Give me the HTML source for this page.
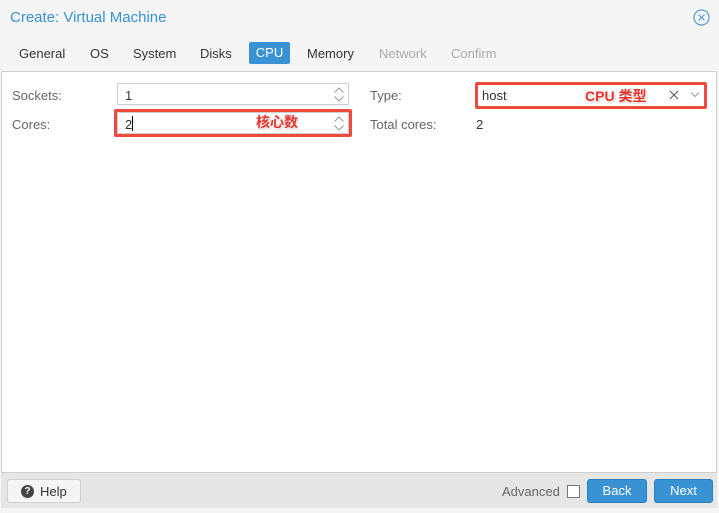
<!DOCTYPE html>
<html><head><style>
*{box-sizing:border-box;margin:0;padding:0}
body{width:719px;height:513px;background:#f5f5f5;font-family:"Liberation Sans","Noto Sans CJK SC",sans-serif;font-size:13px;color:#333;position:relative;overflow:hidden}
.a{position:absolute}
.title{left:10px;top:9px;font-size:15px;color:#3892d4}
.tab{top:46px;font-size:13px;color:#333}
.panel{left:1px;top:71px;width:716px;height:402px;background:#fff;border:1px solid #cfcfcf}
.lbl{color:#666}
.inp{background:#fff;border:1px solid #cfcfcf}
.red{border:3px solid #ee4b3e;border-radius:2px}
.ann{color:#e8322a;font-weight:bold;font-size:14px;text-shadow:0 0 2px #fff,0 0 2px #fff,1px 1px 2px #aaa}
.footer{left:1px;top:473px;width:716px;height:35px;background:#e6e6e6}
.btn{border-radius:3px;text-align:center;line-height:22px}
</style></head><body>
<div class="a title">Create: Virtual Machine</div>
<svg class="a" style="left:693px;top:9px" width="17" height="17" viewBox="0 0 17 17"><circle cx="8.5" cy="8.5" r="7.5" fill="none" stroke="#5b9bd5" stroke-width="1.2"/><path d="M5.5 5.5L11.5 11.5M11.5 5.5L5.5 11.5" stroke="#5b9bd5" stroke-width="1.2"/></svg>
<div class="a tab" style="left:19px">General</div>
<div class="a tab" style="left:90px">OS</div>
<div class="a tab" style="left:133px">System</div>
<div class="a tab" style="left:200px">Disks</div>
<div class="a" style="left:249px;top:42px;width:41px;height:22px;background:#3892d4;border-radius:2px;color:#fff;text-align:center;line-height:22px">CPU</div>
<div class="a tab" style="left:307px">Memory</div>
<div class="a tab" style="left:379px;color:#aaa">Network</div>
<div class="a tab" style="left:451px;color:#aaa">Confirm</div>
<div class="a panel"></div>
<div class="a lbl" style="left:12px;top:88px">Sockets:</div>
<div class="a lbl" style="left:12px;top:117px">Cores:</div>
<div class="a lbl" style="left:370px;top:88px">Type:</div>
<div class="a lbl" style="left:370px;top:117px">Total cores:</div>
<div class="a" style="left:476px;top:117px">2</div>
<div class="a inp" style="left:117px;top:83px;width:232px;height:22px"><span class="a" style="left:7px;top:4px">1</span><svg class="a" style="left:215px;top:2px" width="12" height="17" viewBox="0 0 12 17"><path d="M1.5 6.5L6 2L10.5 6.5M1.5 10.5L6 15L10.5 10.5" fill="none" stroke="#999" stroke-width="1"/></svg></div>
<div class="a red" style="left:114px;top:109px;width:238px;height:28px"></div>
<div class="a inp" style="left:117px;top:112px;width:232px;height:22px"><span class="a" style="left:7px;top:4px">2</span><span class="a" style="left:14px;top:3px;width:1px;height:15px;background:#000"></span><svg class="a" style="left:215px;top:2px" width="12" height="17" viewBox="0 0 12 17"><path d="M1.5 6.5L6 2L10.5 6.5M1.5 10.5L6 15L10.5 10.5" fill="none" stroke="#999" stroke-width="1"/></svg></div>
<div class="a ann" style="left:256px;top:112px">核心数</div>
<div class="a red" style="left:475px;top:82px;width:232px;height:27px"></div>
<div class="a" style="left:478px;top:85px;width:226px;height:21px;background:#fff"><span class="a" style="left:4px;top:3px">host</span><svg class="a" style="left:191px;top:5px" width="10" height="10" viewBox="0 0 10 10"><path d="M1 1L9 9M9 1L1 9" stroke="#555" stroke-width="1.1"/></svg><svg class="a" style="left:212px;top:6px" width="10" height="7" viewBox="0 0 10 7"><path d="M1 1.5L5 5.5L9 1.5" fill="none" stroke="#999" stroke-width="1"/></svg></div>
<div class="a ann" style="left:585px;top:86px">CPU 类型</div>
<div class="a footer"></div>
<div class="a" style="left:7px;top:479px;width:74px;height:24px;background:#f5f5f5;border:1px solid #d0d0d0;border-radius:3px"><span class="a" style="left:13px;top:5px;width:13px;height:13px;border-radius:50%;background:#444;color:#fff;font-size:10px;line-height:13px;font-weight:bold;text-align:center">?</span><span class="a" style="left:32px;top:4px">Help</span></div>
<div class="a" style="left:502px;top:484px;color:#666">Advanced</div>
<div class="a" style="left:567px;top:485px;width:13px;height:13px;border:1px solid #777;background:#fff"></div>
<div class="a btn" style="left:587px;top:479px;width:60px;height:24px;background:#3892d4;border:1px solid #2f7fc0;color:#fff">Back</div>
<div class="a btn" style="left:654px;top:479px;width:59px;height:24px;background:#3892d4;border:1px solid #2f7fc0;color:#fff">Next</div>
</body></html>
